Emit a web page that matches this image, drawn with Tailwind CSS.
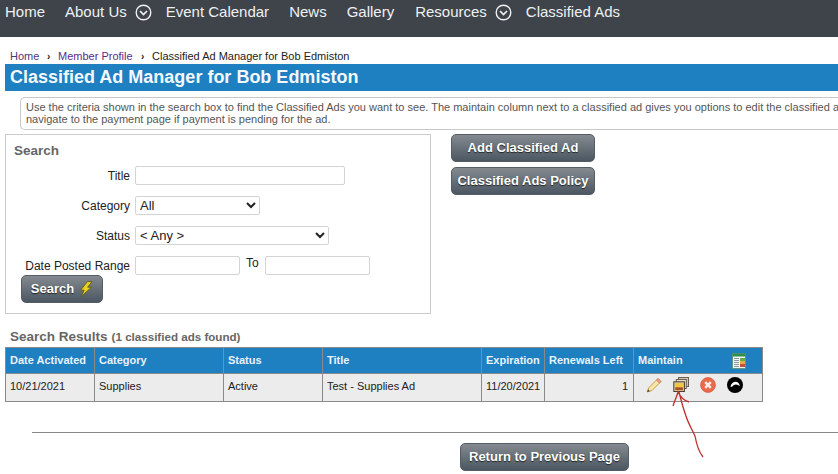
<!DOCTYPE html>
<html lang="en">
<head>
<meta charset="UTF-8">
<title>Classified Ad Manager</title>
<script src="https://cdn.jsdelivr.net/npm/@tailwindcss/browser@4"></script>
</head>
<body class="relative h-[474px] w-[838px] overflow-hidden bg-white font-['Liberation_Sans',Arial,sans-serif] text-[11px] text-[#222]">

<!-- top nav -->
<nav class="flex h-[37px] items-start gap-[20px] bg-[#3f444b] pl-[5px] pt-[3px] text-[15px] leading-[18px] text-[#eef0f2]">
  <a>Home</a>
  <a class="flex items-center gap-[8px]">About Us
    <svg class="h-[17px] w-[17px]" viewBox="0 0 17 17" fill="none" stroke="#eef0f2" stroke-width="1.4"><circle cx="8.5" cy="8.5" r="7.3"/><path d="M5 7l3.5 3.5L12 7" stroke-width="1.7"/></svg>
  </a>
  <a class="-ml-[6px]">Event Calendar</a>
  <a>News</a>
  <a>Gallery</a>
  <a class="ml-[1px] flex items-center gap-[8px]">Resources
    <svg class="h-[17px] w-[17px]" viewBox="0 0 17 17" fill="none" stroke="#eef0f2" stroke-width="1.4"><circle cx="8.5" cy="8.5" r="7.3"/><path d="M5 7l3.5 3.5L12 7" stroke-width="1.7"/></svg>
  </a>
  <a class="-ml-[6px]">Classified Ads</a>
</nav>

<!-- breadcrumb -->
<div class="flex h-[27px] items-end pb-[1px] pl-[10px] leading-[13px]">
  <a class="w-[37px] text-[#4a3a78]">Home</a>
  <span class="w-[11px] text-[10px] font-bold">›</span>
  <a class="w-[83px] text-[#5b2a86]">Member Profile</a>
  <span class="w-[11px] text-[10px] font-bold">›</span>
  <span>Classified Ad Manager for Bob Edmiston</span>
</div>

<h1 class="ml-[5px] flex h-[27px] items-center bg-[#1e80c1] pl-[5px] text-[18px] font-bold text-[#f4f8fb]">Classified Ad Manager for Bob Edmiston</h1>

<!-- help text, the box runs on past the right edge of the window -->
<div class="ml-[20px] mt-[6px] h-[33px] overflow-hidden rounded-l-[5px] border border-r-0 border-[#c8c8c8] pl-[5px] pt-[3px] leading-[12px] whitespace-nowrap text-[#555]">
  Use the criteria shown in the search box to find the Classified Ads you want to see. The maintain column next to a classified ad gives you options to edit the classified a<br>
  navigate to the payment page if payment is pending for the ad.
</div>

<div class="ml-[5px] mt-[4px] flex items-start gap-[20px]">
  <!-- search box -->
  <form class="h-[180px] w-[426px] border border-[#ccc] pl-[8px] pt-[8px]">
    <div class="text-[13.5px] font-bold leading-[15px] text-[#666]">Search</div>
    <div class="mt-[8px] flex h-[19px] items-center gap-[5px] text-[12px]">
      <label class="w-[116px] text-right">Title</label>
      <input class="h-[19px] w-[210px] rounded-[2px] border border-[#d4d4d4] bg-white">
    </div>
    <div class="mt-[11px] flex h-[19px] items-center gap-[5px] text-[12px]">
      <label class="w-[116px] text-right">Category</label>
      <select class="h-[19px] w-[125px] rounded-[2px] border border-[#d4d4d4] bg-white text-[13px] leading-[15px]"><option>All</option></select>
    </div>
    <div class="mt-[11px] flex h-[19px] items-center gap-[5px] text-[12px]">
      <label class="w-[116px] text-right">Status</label>
      <select class="h-[19px] w-[194px] rounded-[2px] border border-[#d4d4d4] bg-white text-[13px] leading-[15px]"><option>&lt; Any &gt;</option></select>
    </div>
    <div class="mt-[11px] flex h-[19px] items-center text-[12px]">
      <label class="w-[116px] whitespace-nowrap text-right">Date Posted Range</label>
      <input class="ml-[5px] h-[19px] w-[105px] rounded-[2px] border border-[#d4d4d4] bg-white">
      <span class="ml-[6px] w-[19px] -translate-y-[3px]">To</span>
      <input class="h-[19px] w-[105px] rounded-[2px] border border-[#d4d4d4] bg-white">
    </div>
    <button type="button" class="ml-[7px] flex h-[28px] w-[82px] items-center justify-center gap-[5px] rounded-[5px] border border-[#565c63] bg-gradient-to-b from-[#858a90] to-[#4b5762] text-[13px] font-bold text-white [text-shadow:0_1px_1px_#222]">
      Search
      <svg class="h-[16px] w-[14px] shrink-0" viewBox="0 0 14 16"><path d="M8.5.6L1.6 9.2h3.6L2.2 15.4 12.6 6.2H8.7L13 .6z" fill="#ecd21e" stroke="#5f5a14" stroke-width=".9"/></svg>
    </button>
  </form>

  <div class="flex flex-col gap-[5px]">
    <a class="flex h-[28px] w-[144px] items-center justify-center rounded-[5px] border border-[#565c63] bg-gradient-to-b from-[#858a90] to-[#4b5762] text-[13px] font-bold text-white [text-shadow:0_1px_1px_#222]">Add Classified Ad</a>
    <a class="flex h-[28px] w-[144px] items-center justify-center whitespace-nowrap rounded-[5px] border border-[#565c63] bg-gradient-to-b from-[#858a90] to-[#4b5762] text-[13px] font-bold text-white [text-shadow:0_1px_1px_#222]">Classified Ads Policy</a>
  </div>
</div>

<!-- results -->
<div class="ml-[10px] mt-[13px] h-[20px] text-[#666]"><span class="text-[13.5px] font-bold">Search Results</span> <span class="ml-[1px] text-[11.6px] font-bold">(1 classified ads found)</span></div>

<table class="ml-[5px] w-[757px] table-fixed border-collapse border border-[#8a8a8a]">
  <colgroup>
    <col class="w-[89px]"><col class="w-[129px]"><col class="w-[99px]"><col class="w-[159px]"><col class="w-[63px]"><col class="w-[89px]"><col class="w-[129px]">
  </colgroup>
  <thead>
    <tr class="h-[26px] bg-[#1e80c1] text-left font-bold text-[#e8f2f9]">
      <th class="border border-[#8a8a8a] pl-[4px]">Date Activated</th>
      <th class="border border-[#8a8a8a] pl-[4px]">Category</th>
      <th class="border border-[#8a8a8a] pl-[4px]">Status</th>
      <th class="border border-[#8a8a8a] pl-[4px]">Title</th>
      <th class="border border-[#8a8a8a] pl-[4px]">Expiration</th>
      <th class="border border-[#8a8a8a] pl-[4px]">Renewals Left</th>
      <th class="border border-[#8a8a8a] pl-[4px]">
        <div class="flex items-center justify-between pr-[15px]">Maintain
          <svg class="h-[16px] w-[16px]" viewBox="0 0 16 16"><rect x="1.5" y=".5" width="13" height="15" fill="#f2f5f4" stroke="#5d8a70" stroke-width=".8"/><rect x="1.5" y=".5" width="13" height="3" fill="#2f8f4f"/><path d="M3 5.5h5M3 7.5h5M3 9.5h5M3 11.5h5M3 13.5h5" stroke="#8a9aa0"/><rect x="9" y="5" width="5" height="3" fill="#6aa84f"/><rect x="9" y="8" width="5" height="3" fill="#e0b040"/><rect x="9" y="11" width="5" height="3" fill="#c85040"/></svg>
        </div>
      </th>
    </tr>
  </thead>
  <tbody>
    <tr class="h-[28px] bg-[#ececec] align-top">
      <td class="border border-[#8a8a8a] pl-[4px] pt-[4px]">10/21/2021</td>
      <td class="border border-[#8a8a8a] pl-[4px] pt-[4px]">Supplies</td>
      <td class="border border-[#8a8a8a] pl-[4px] pt-[4px]">Active</td>
      <td class="border border-[#8a8a8a] pl-[4px] pt-[4px]">Test - Supplies Ad</td>
      <td class="border border-[#8a8a8a] pl-[4px] pt-[4px]">11/20/2021</td>
      <td class="border border-[#8a8a8a] pr-[5px] pt-[4px] text-right">1</td>
      <td class="border border-[#8a8a8a] pl-[12px] pt-[3px]">
        <div class="flex items-start gap-[11px]">
          <svg class="h-[16px] w-[16px]" viewBox="0 0 16 16"><path d="M3 10.5L12 1.5l3 3L6 13.5 1.2 15z" fill="#fbe6a8" stroke="#c3933a" stroke-width=".9"/><path d="M12 1.5l3 3-1.6 1.6-3-3z" fill="#ee9a90" stroke="#c96f68" stroke-width=".6"/><path d="M1.2 15l.8-2.7 1.9 1.9z" fill="#444"/></svg>
          <svg class="h-[16px] w-[16px]" viewBox="0 0 16 16"><rect x="5.5" y=".5" width="10" height="9" fill="#cfc6b4" stroke="#6a5f50"/><rect x="3.3" y="2.5" width="10" height="9" fill="#e6dfce" stroke="#6a5f50"/><rect x=".8" y="4.8" width="10.6" height="9.7" fill="#d9c9a0" stroke="#4a3f30"/><rect x="2.3" y="6.3" width="7.6" height="4" fill="#f0c838"/><rect x="2.3" y="10.3" width="7.6" height="2.8" fill="#a8521f"/></svg>
          <svg class="h-[16px] w-[16px]" viewBox="0 0 16 16"><circle cx="8" cy="8" r="7.4" fill="#ea6a4c" stroke="#d85a40" stroke-width=".8"/><path d="M5.2 5.2l5.6 5.6M10.8 5.2l-5.6 5.6" stroke="#fbeee8" stroke-width="2.4"/></svg>
          <svg class="h-[16px] w-[16px]" viewBox="0 0 16 16"><circle cx="8" cy="8" r="8" fill="#000"/><path d="M3.4 9.8C4.2 6 6.8 4.6 9 4.8c2.2.3 3.6 2 3.7 4.4L11 8C9.6 7 6.6 7 5.2 9.8z" fill="#fff"/></svg>
        </div>
      </td>
    </tr>
  </tbody>
</table>

<hr class="ml-[32px] mt-[30px] border-t border-[#888]">

<a class="ml-[460px] mt-[10px] flex h-[28px] w-[169px] items-center justify-center rounded-[5px] border border-[#565c63] bg-gradient-to-b from-[#858a90] to-[#4b5762] text-[13px] font-bold text-white [text-shadow:0_1px_1px_#222]">Return to Previous Page</a>

<!-- red hand-drawn arrow over the table -->
<svg class="absolute left-0 top-0 h-[474px] w-[838px]" viewBox="0 0 838 474" fill="none" stroke="#bf2f2b" stroke-width="1.3"><path d="M703 457C699 452 697 447 695 436 692 429 688 423 686 416 683 408 681 400 679 392M673 406C675 400 677 396 678 392 681 398 685 401 689 402"/></svg>

</body>
</html>
